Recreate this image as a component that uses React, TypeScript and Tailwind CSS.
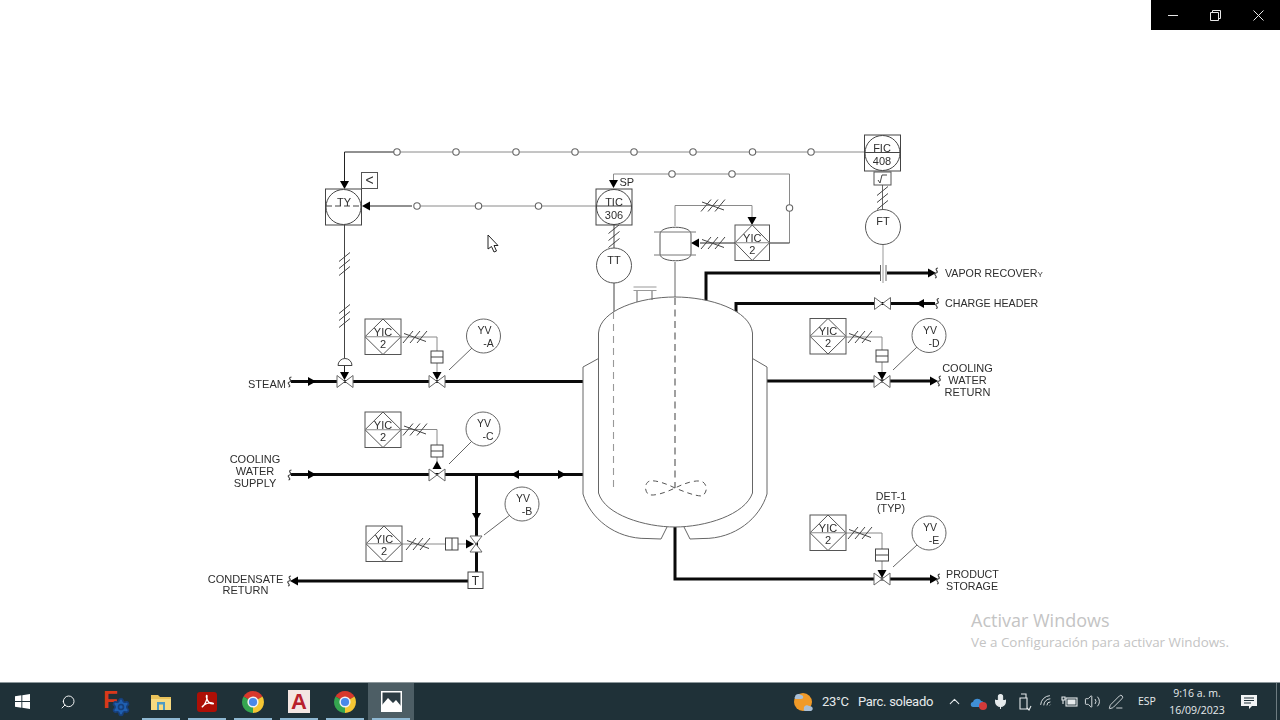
import { ChevronUp, Mic, Search, Settings, Volume2, Wifi, PenLine } from "lucide-react";

const WIRE = "#8a8a8a";
const PIPE = "#0a0a0a";

const TOP_BUBBLES = [397, 456, 516, 575, 634, 693, 752.5, 811];
const MID_BUBBLES = [417, 478.5, 538.5];

function Label({ x, y, children, anchor = "middle", size = 11 }: { x: number; y: number; children: React.ReactNode; anchor?: "start" | "middle"; size?: number }) {
  return (
    <text x={x} y={y} textAnchor={anchor} fontSize={size} fill="#2e2e2e">
      {children}
    </text>
  );
}

function Bubble({ x, y }: { x: number; y: number }) {
  return <circle cx={x} cy={y} r={3.2} fill="#fff" stroke="#666" strokeWidth={1.1} />;
}

function Tri({ x, y, dir }: { x: number; y: number; dir: "u" | "d" | "l" | "r" }) {
  // x,y is the tip of the arrow
  const s = 4.5;
  const l = 8;
  const pts = {
    d: `${x},${y} ${x - s},${y - l} ${x + s},${y - l}`,
    u: `${x},${y} ${x - s},${y + l} ${x + s},${y + l}`,
    l: `${x},${y} ${x + l},${y - s} ${x + l},${y + s}`,
    r: `${x},${y} ${x - l},${y - s} ${x - l},${y + s}`,
  }[dir];
  return <polygon points={pts} fill="#000" />;
}

function HValve({ x, y }: { x: number; y: number }) {
  return (
    <polygon
      points={`${x - 8},${y - 6} ${x},${y} ${x + 8},${y - 6} ${x + 8},${y + 6} ${x},${y} ${x - 8},${y + 6}`}
      fill="#fff"
      stroke="#666"
      strokeWidth={1}
    />
  );
}

function VValve({ x, y }: { x: number; y: number }) {
  return (
    <polygon
      points={`${x - 6},${y - 8} ${x + 6},${y - 8} ${x},${y} ${x + 6},${y + 8} ${x - 6},${y + 8} ${x},${y}`}
      fill="#fff"
      stroke="#666"
      strokeWidth={1}
    />
  );
}

function HHash({ x, y }: { x: number; y: number }) {
  return (
    <g stroke="#444" strokeWidth={1}>
      {[-7, 0, 7].map((d) => (
        <line key={d} x1={x + d - 5} y1={y + 6} x2={x + d + 5} y2={y - 6} />
      ))}
      <line x1={x - 11} y1={y - 3.5} x2={x + 11} y2={y + 4.5} />
    </g>
  );
}

function VHash({ x, y }: { x: number; y: number }) {
  return (
    <g stroke="#444" strokeWidth={1}>
      {[-7, 0, 7].map((d) => (
        <line key={d} x1={x - 5.5} y1={y + d + 4.5} x2={x + 5.5} y2={y + d - 4.5} />
      ))}
    </g>
  );
}

function Squiggle({ x, y }: { x: number; y: number }) {
  return <path d={`M${x + 2} ${y - 5} C${x - 3} ${y - 4} ${x + 4} ${y - 1} ${x} ${y} C${x - 4} ${y + 1} ${x + 3} ${y + 4} ${x - 1} ${y + 5}`} fill="none" stroke="#444" strokeWidth={1.2} />;
}

// square box with diamond, the repeated YIC 2 controller
function Yic({ x, y, w = 36, h = 35.5 }: { x: number; y: number; w?: number; h?: number }) {
  const cx = x + w / 2;
  const cy = y + h / 2;
  return (
    <g>
      <rect x={x} y={y} width={w} height={h} fill="#fff" stroke="#555" strokeWidth={1} />
      <polygon points={`${cx},${y} ${x + w},${cy} ${cx},${y + h} ${x},${cy}`} fill="none" stroke="#555" strokeWidth={1} />
      <line x1={x} y1={cy} x2={x + w} y2={cy} stroke={WIRE} strokeWidth={1} />
      <Label x={cx} y={cy - 1} size={11}>YIC</Label>
      <Label x={cx} y={cy + 11} size={11}>2</Label>
    </g>
  );
}

function YvTag({ cx, cy, a, b, from, to }: { cx: number; cy: number; a: string; b: string; from: [number, number]; to: [number, number] }) {
  return (
    <g>
      <circle cx={cx} cy={cy} r={17} fill="#fff" stroke="#666" strokeWidth={1} />
      <Label x={cx + 1} y={cy - 2} size={10.5}>{a}</Label>
      <Label x={cx + 5} y={cy + 11} size={10.5}>{b}</Label>
      <line x1={from[0]} y1={from[1]} x2={to[0]} y2={to[1]} stroke="#666" strokeWidth={1} />
    </g>
  );
}

function Actuator({ x, y, w = 12, h = 12 }: { x: number; y: number; w?: number; h?: number }) {
  return (
    <g fill="none" stroke="#444" strokeWidth={1}>
      <rect x={x} y={y} width={w} height={h} fill="#fff" />
      <line x1={x} y1={y + h / 2} x2={x + w} y2={y + h / 2} />
    </g>
  );
}

function Reactor() {
  return (
    <g fill="none" stroke="#666" strokeWidth={1}>
      <path d="M598.5 493 V333 C600 310 640 297 675 297 C710 297 750 310 752.5 333 V493 C745 515 705 527 675 527 C645 527 605 515 598.5 493 Z" fill="#fff" />
      <path d="M598.5 358.5 L583 367 V494 C590 518 615 539 647 538.5 L661 539 L667 527" />
      <path d="M752.5 358.5 L767 367 V494 C760 518 735 539 703 538.5 L690 539 L684 527" />
      <line x1={675} y1={298} x2={675} y2={488} stroke="#888" strokeWidth={1.6} strokeDasharray="7 4.5" />
      <line x1={613.5} y1={312} x2={613.5} y2={488} stroke="#999" strokeWidth={1.1} strokeDasharray="7 5" />
      <path d="M675 488 C665 483 655 480 650 481 C645 482 644 490 648 494 C652 497 665 493 675 488 C685 483 697 479 703 482 C708 486 707 493 702 496 C695 496 685 492 675 488" stroke="#555" strokeDasharray="5 4" />
      {/* nozzle on the head */}
      <path d="M633.5 287 H656.5 M633.5 290.5 H656.5" stroke="#999" />
      <path d="M637 291 V302 M652 291 V300" />
    </g>
  );
}

function Diagram() {
  return (
    <svg
      width={860}
      height={480}
      viewBox="190 125 860 480"
      className="blur-[0.35px] font-['Liberation_Sans',Arial,sans-serif]"
    >
      {/* signal wires */}
      <g fill="none" strokeWidth={1}>
        <path d="M397 152 H344.5 V182" stroke="#222" />
        <path d="M397 152 H865" stroke={WIRE} />
        <path d="M412 206 H370" stroke="#222" />
        <path d="M417 206 H596" stroke={WIRE} />
        <path d="M613.5 181 V174 H789.5 V243" stroke={WIRE} />
        <path d="M789.5 243 H700" stroke="#222" />
        <path d="M675 226 V205.5 H752 V217" stroke={WIRE} />
        <path d="M675 262 V298" stroke="#666" />
        <path d="M344.5 225 V358" stroke="#444" />
        <path d="M344.5 365 V373" stroke="#222" />
        <path d="M614 225 V248 M614 283 V313" stroke="#444" />
        <path d="M882.5 185 V210" stroke="#666" />
        <path d="M883 244 V283" stroke="#999" />
        <path d="M401 337 H437 V351 M437 363 V373" stroke={WIRE} />
        <path d="M401 429.5 H437 V445 M437 457 V462" stroke={WIRE} />
        <path d="M402 544 H466" stroke={WIRE} />
        <path d="M846 337 H882 V350 M882 362 V372" stroke={WIRE} />
        <path d="M846 533 H882 V549 M882 561 V571" stroke={WIRE} />
      </g>

      {TOP_BUBBLES.map((x) => <Bubble key={x} x={x} y={152} />)}
      {MID_BUBBLES.map((x) => <Bubble key={x} x={x} y={206} />)}
      <Bubble x={672} y={174} />
      <Bubble x={732} y={174} />
      <Bubble x={789.5} y={208} />

      {/* process pipes */}
      <g fill="none" stroke={PIPE} strokeWidth={3}>
        <path d="M291 381.5 H583" />
        <path d="M291 474.5 H583" />
        <path d="M476.5 474.5 V572" />
        <path d="M296 581 H468" />
        <path d="M706 301 V273 H880 M887 273 H928" />
        <path d="M736 313 V303.5 H935" />
        <path d="M767 381 H930" />
        <path d="M675 527 V579 H930" />
      </g>

      <Reactor />

      {/* arrows */}
      <Tri x={344.5} y={189} dir="d" />
      <Tri x={362} y={206} dir="l" />
      <Tri x={613.5} y={188} dir="d" />
      <Tri x={752} y={225} dir="d" />
      <Tri x={691} y={243} dir="l" />
      <Tri x={316} y={381.5} dir="r" />
      <Tri x={316} y={474.5} dir="r" />
      <Tri x={511} y={474.5} dir="l" />
      <Tri x={566} y={474.5} dir="r" />
      <Tri x={476.5} y={521} dir="d" />
      <Tri x={474} y={544} dir="r" />
      <Tri x={290} y={581} dir="l" />
      <Tri x={936} y={273} dir="r" />
      <Tri x={916} y={303.5} dir="l" />
      <Tri x={938} y={381} dir="r" />
      <Tri x={938} y={579} dir="r" />
      <Tri x={437} y={461} dir="u" />

      {/* valves */}
      <HValve x={345} y={381.5} />
      <HValve x={437} y={381.5} />
      <HValve x={437} y={475} />
      <HValve x={882.5} y={303.5} />
      <HValve x={882} y={381.5} />
      <HValve x={882} y={579} />
      <VValve x={476} y={544} />
      <path d="M338 365.5 A7 7 0 0 1 352 365.5 Z" fill="#fff" stroke="#444" strokeWidth={1} />

      {/* arrows that sit on the valve centres go over the valves */}
      <Tri x={344.5} y={380} dir="d" />
      <Tri x={437} y={380} dir="d" />
      <Tri x={882} y={380} dir="d" />
      <Tri x={882} y={578} dir="d" />

      <Actuator x={431} y={351} />
      <Actuator x={431} y={445} />
      <Actuator x={876} y={350} />
      <Actuator x={875.5} y={549} w={13} />
      <g fill="#fff" stroke="#444">
        <rect x={445.5} y={538} width={12.5} height={12} />
        <line x1={452} y1={538} x2={452} y2={550} />
      </g>

      <HHash x={415} y={337} />
      <HHash x={415} y={429.5} />
      <HHash x={418} y={544} />
      <HHash x={860} y={337} />
      <HHash x={860} y={533} />
      <HHash x={713} y={205.5} />
      <HHash x={713} y={243} />
      <VHash x={344.5} y={264} />
      <VHash x={344.5} y={316} />
      <VHash x={614} y={236} />
      <VHash x={882.5} y={198} />

      {/* orifice plate */}
      <path d="M880.5 265 V281 M886 265 V281" stroke="#666" strokeWidth={1} />

      {/* TY */}
      <rect x={325.5} y={189} width={36} height={36} fill="#fff" stroke="#444" />
      <circle cx={343.5} cy={207} r={17.5} fill="#fff" stroke="#444" />
      <line x1={326} y1={206} x2={361} y2={206} stroke="#444" strokeDasharray="6 3" />
      <Label x={344} y={206}>TY</Label>
      <rect x={361.5} y={172.5} width={16} height={16} fill="#fff" stroke="#555" />
      <Label x={369.5} y={185} size={14}>&lt;</Label>

      {/* TIC */}
      <rect x={596} y={189} width={36} height={36} fill="#fff" stroke="#444" />
      <circle cx={614} cy={207} r={17.5} fill="#fff" stroke="#444" />
      <line x1={596} y1={206} x2={632} y2={206} stroke="#444" />
      <Label x={614} y={205.5}>TIC</Label>
      <Label x={614} y={218.5}>306</Label>
      <Label x={619.5} y={186} anchor="start">SP</Label>

      {/* TT */}
      <circle cx={614} cy={265.5} r={17.5} fill="#fff" stroke="#555" />
      <Label x={614} y={264}>TT</Label>

      {/* FIC + FT */}
      <rect x={864.5} y={135} width={36} height={36} fill="#fff" stroke="#444" />
      <circle cx={882.5} cy={153} r={17.5} fill="#fff" stroke="#444" />
      <line x1={864.5} y1={152.5} x2={900.5} y2={152.5} stroke="#444" />
      <Label x={882} y={151.5}>FIC</Label>
      <Label x={882} y={164.5}>408</Label>
      <rect x={874} y={172} width={17} height={13} fill="#fff" stroke="#555" />
      <path d="M878 180 L880 183 L882 175 H887" fill="none" stroke="#444" />
      <circle cx={883} cy={227} r={17.5} fill="#fff" stroke="#555" />
      <Label x={883} y={225}>FT</Label>

      {/* knock-out pot */}
      <path d="M660 234 C660 225 691 225 691 234 V254 C691 263 660 263 660 254 Z" fill="#fff" stroke="#555" />
      <path d="M654 232 H696 M654 255 H696" stroke="#777" />

      {/* YIC 2 controllers */}
      <Yic x={365} y={319} />
      <Yic x={365} y={412} />
      <Yic x={366} y={526} />
      <Yic x={810} y={318.5} />
      <Yic x={810} y={515} />
      <Yic x={735} y={225} w={34.5} h={35.5} />

      <YvTag cx={483.5} cy={336} a="YV" b="-A" from={[449, 370]} to={[472, 348]} />
      <YvTag cx={483} cy={429} a="YV" b="-C" from={[449, 464]} to={[472, 441]} />
      <YvTag cx={522} cy={504} a="YV" b="-B" from={[484, 535]} to={[510, 515]} />
      <YvTag cx={929} cy={335.5} a="YV" b="-D" from={[893, 370]} to={[917, 347]} />
      <YvTag cx={929} cy={533} a="YV" b="-E" from={[893, 567]} to={[917, 545]} />

      {/* steam trap */}
      <rect x={468} y={572} width={15} height={16.5} fill="#fff" stroke="#444" />
      <Label x={475.5} y={585} size={12}>T</Label>

      <Squiggle x={289.5} y={382} />
      <Squiggle x={289.5} y={475} />
      <Squiggle x={289} y={581} />
      <Squiggle x={936} y={273} />
      <Squiggle x={937} y={303.5} />
      <Squiggle x={939} y={381} />
      <Squiggle x={938} y={579} />

      <Label x={248} y={388} anchor="start">STEAM</Label>
      <Label x={255} y={463}>COOLING</Label>
      <Label x={255} y={475}>WATER</Label>
      <Label x={255} y={487}>SUPPLY</Label>
      <Label x={245.5} y={583}>CONDENSATE</Label>
      <Label x={245.5} y={594}>RETURN</Label>
      <Label x={945} y={277} anchor="start" size={10.7}>VAPOR RECOVER<tspan fontSize={8}>Y</tspan></Label>
      <Label x={945} y={307} anchor="start" size={10.7}>CHARGE HEADER</Label>
      <Label x={967.5} y={372}>COOLING</Label>
      <Label x={967.5} y={384}>WATER</Label>
      <Label x={967.5} y={396}>RETURN</Label>
      <Label x={946} y={578} anchor="start" size={10.7}>PRODUCT</Label>
      <Label x={946} y={589.5} anchor="start" size={10.7}>STORAGE</Label>
      <Label x={891} y={500} size={10.7}>DET-1</Label>
      <Label x={891} y={512} size={10.7}>(TYP)</Label>

      {/* mouse pointer */}
      <path d="M488 235 V249 L491.5 246.5 L494 252 L496.5 251 L494 245.5 L498 245.5 Z" fill="#fff" stroke="#222" strokeWidth={1} />
    </svg>
  );
}

function ChromeIcon() {
  return (
    <svg width={24} height={24} viewBox="0 0 24 24">
      <path d="M12 12 L2.5 6.5 A11 11 0 0 1 21.5 6.5 Z" fill="#d8382c" />
      <path d="M12 12 L21.5 6.5 A11 11 0 0 1 12 23 Z" fill="#f5c633" />
      <path d="M12 12 L12 23 A11 11 0 0 1 2.5 6.5 Z" fill="#35a54f" />
      <circle cx={12} cy={12} r={5.6} fill="#f2f2f2" />
      <circle cx={12} cy={12} r={4.1} fill="#4a88ea" />
    </svg>
  );
}

function TaskIcon({ children, running, active }: { children: React.ReactNode; running?: boolean; active?: boolean }) {
  return (
    <div className={`relative flex h-full w-[46px] shrink-0 items-center justify-center ${active ? "bg-[#4d5e65]" : ""}`}>
      {children}
      {running && <div className="absolute bottom-0 left-[4px] right-[4px] h-[2px] bg-[#8fb8d2]" />}
    </div>
  );
}

function Taskbar() {
  return (
    <footer className="flex h-[38px] shrink-0 items-stretch border-t border-[#8d989c] bg-[#1f3138] font-['Open_Sans',sans-serif] text-[#e6eaec]">
      <div className="-ml-px flex">
        <TaskIcon>
          <svg width={15} height={15} viewBox="0 0 16 16" fill="#fff">
            <path d="M0 2.4 6.8 1.4 V7.5 H0 Z M7.8 1.3 16 0 V7.5 H7.8 Z M0 8.5 H6.8 V14.6 L0 13.6 Z M7.8 8.5 H16 V16 L7.8 14.7 Z" />
          </svg>
        </TaskIcon>
        <TaskIcon>
          <Search size={16} strokeWidth={1.4} className="-scale-x-100 text-white" />
        </TaskIcon>
      </div>
      <div className="ml-px flex">
        <TaskIcon>
          <div className="relative h-[24px] w-[24px]">
            <span className="absolute left-0 top-[-3px] font-['Liberation_Sans'] text-[24px] font-bold leading-[26px] text-[#d9391a]">F</span>
            <Settings size={20} fill="#1f5fb0" strokeWidth={2} className="absolute bottom-[-3px] right-[-4px] text-[#173f7a]" />
          </div>
        </TaskIcon>
        <TaskIcon running>
          <svg width={22} height={20} viewBox="0 0 22 20">
            <path d="M1 3 H8 L10 5 H21 V18 H1 Z" fill="#e9c25a" />
            <rect x={1} y={7} width={20} height={11} fill="#f6d980" />
            <rect x={7} y={10} width={8} height={8} fill="#4d9ac4" />
            <rect x={9} y={12.5} width={4} height={5.5} fill="#f6d980" />
          </svg>
        </TaskIcon>
        <TaskIcon running>
          <div className="flex h-[20px] w-[20px] items-center justify-center rounded-[3px] bg-[#ad0f06]">
            <svg width={15} height={15} viewBox="0 0 16 16" fill="none" stroke="#fff" strokeWidth={1.4}>
              <path d="M2 14 C5 12 8 6 7.5 2 C7 1 6.5 2 7 4 C8 8 11 10.5 14 10.5 C15 10 13 9 10 9.5 C7 10 4 11 2 14 Z" />
            </svg>
          </div>
        </TaskIcon>
        <TaskIcon running>
          <ChromeIcon />
        </TaskIcon>
        <TaskIcon running>
          <div className="flex h-[23px] w-[22px] items-center justify-center bg-[#f4e6e2] font-['Liberation_Sans'] text-[22px] font-bold leading-none text-[#b8202c]">A</div>
        </TaskIcon>
        <TaskIcon running>
          <ChromeIcon />
        </TaskIcon>
        <TaskIcon running active>
          <svg width={21} height={21} viewBox="0 0 21 21">
            <rect x={0.75} y={0.75} width={19.5} height={19.5} fill="#2c3c44" stroke="#fff" strokeWidth={1.5} />
            <path d="M1 20 V14 L7 7 L12 12 L15 9 L20 15 V20 Z" fill="#fff" />
          </svg>
        </TaskIcon>
      </div>

      <div className="ml-auto flex items-center whitespace-nowrap font-['Roboto',sans-serif] text-[13px] tracking-[-0.3px]">
        <svg width={24} height={24} viewBox="0 0 24 24" className="mr-[7px]">
          <circle cx={12} cy={12} r={9} fill="#f09a28" />
          <path d="M4 7 C4 4 8 3 10 5 C13 5 13 9 10 9 H5 C3.500 9 3 7.500 4 7 Z" fill="#a9bfd6" />
          <path d="M13 19 C12 16 16 14 18 16 C22 15.500 23 20 20 21 H14 C13 21 12 20 13 19 Z" fill="#a9bfd6" />
        </svg>
        <span className="w-[36px]">23°C</span>
        <span className="w-[85px]">Parc. soleado</span>
      </div>

      <div className="flex items-center">
        <div className="flex w-[23px] justify-center"><ChevronUp size={17} strokeWidth={1.5} /></div>
        <div className="relative flex w-[23px] justify-center">
          <svg width={16} height={12} viewBox="0 0 16 12"><path d="M3 11 C0 11 0 6 3 6 C4 2 10 2 11 5 C15 5 15 11 12 11 Z" fill="#3f8fd6" /></svg>
          <div className="absolute bottom-[-2px] right-[2px] h-[8px] w-[8px] rounded-full bg-[#d23a3a]" />
        </div>
        <div className="flex w-[23px] justify-center"><Mic size={17} fill="#e6eaec" strokeWidth={1.5} /></div>
        <div className="flex w-[23px] justify-center">
          <svg width={16} height={18} viewBox="0 0 16 18" fill="none" stroke="#e6eaec" strokeWidth={1.1}>
            <path d="M5 1 H10 V5 M4 5 H11 V16 H4 Z" />
            <path d="M11 15 L13 17 L15 13" />
          </svg>
        </div>
        <div className="flex w-[23px] justify-center"><Wifi size={15} strokeWidth={1.4} className="rotate-[-45deg]" /></div>
        <div className="flex w-[23px] justify-center">
          <svg width={18} height={14} viewBox="0 0 18 14" fill="none" stroke="#e6eaec" strokeWidth={1.1}>
            <rect x={5} y={3} width={11} height={8} />
            <rect x={7} y={5} width={7} height={4} fill="#e6eaec" />
            <path d="M1 2 H4 V5 H1 Z M2 5 V9" />
          </svg>
        </div>
        <div className="flex w-[23px] justify-center"><Volume2 size={17} strokeWidth={1.3} /></div>
        <div className="flex w-[24px] justify-center"><PenLine size={16} strokeWidth={1.3} /></div>
        <div className="w-[38px] text-center text-[10.5px]">ESP</div>
        <div className="w-[62px] text-center text-[10.5px] leading-[17px]">
          <div>9:16 a. m.</div>
          <div>16/09/2023</div>
        </div>
        <div className="flex w-[42px] justify-center">
          <svg width={18} height={18} viewBox="0 0 18 18">
            <path d="M1 2 H17 V13 H12 L9 16 V13 H1 Z" fill="#f2f4f5" />
            <path d="M4 5 H14 M4 7.500 H14 M4 10 H11" stroke="#1f3138" strokeWidth={1} />
          </svg>
        </div>
        <div className="flex h-full w-[10px] justify-end pr-[3px]"><div className="h-full w-px bg-[#6d7b80]" /></div>
      </div>
    </footer>
  );
}

export default function App() {
  return (
    <div className="relative flex h-[720px] w-[1280px] flex-col overflow-hidden bg-white">
      <div className="flex h-[30px] shrink-0 justify-end">
        <div className="flex w-[129px] items-center bg-black text-[#e8e8e8]">
          <div className="flex w-[43px] justify-center">
            <div className="h-px w-[10px] bg-current" />
          </div>
          <div className="flex w-[43px] justify-center">
            <svg width={11} height={11} viewBox="0 0 11 11" fill="none" stroke="currentColor"><path d="M0.5 2.500 H8.500 V10.500 H0.500 Z M2.500 2.500 V0.500 H10.500 V8.500 H8.500" /></svg>
          </div>
          <div className="flex w-[43px] justify-center">
            <svg width={11} height={11} viewBox="0 0 11 11" fill="none" stroke="currentColor"><path d="M0.500 0.500 L10.500 10.500 M10.500 0.500 L0.500 10.500" /></svg>
          </div>
        </div>
      </div>

      <main className="flex-1 pl-[190px] pt-[95px]">
        <Diagram />
      </main>

      {/* Windows activation watermark floats over the page */}
      <div className="absolute left-[971px] top-[608px] font-['Open_Sans',sans-serif] text-[#c4c4c4]">
        <div className="text-[18px] leading-[24px]">Activar Windows</div>
        <div className="mt-px text-[13.4px] leading-[18px]">Ve a Configuración para activar Windows.</div>
      </div>

      <Taskbar />
    </div>
  );
}
